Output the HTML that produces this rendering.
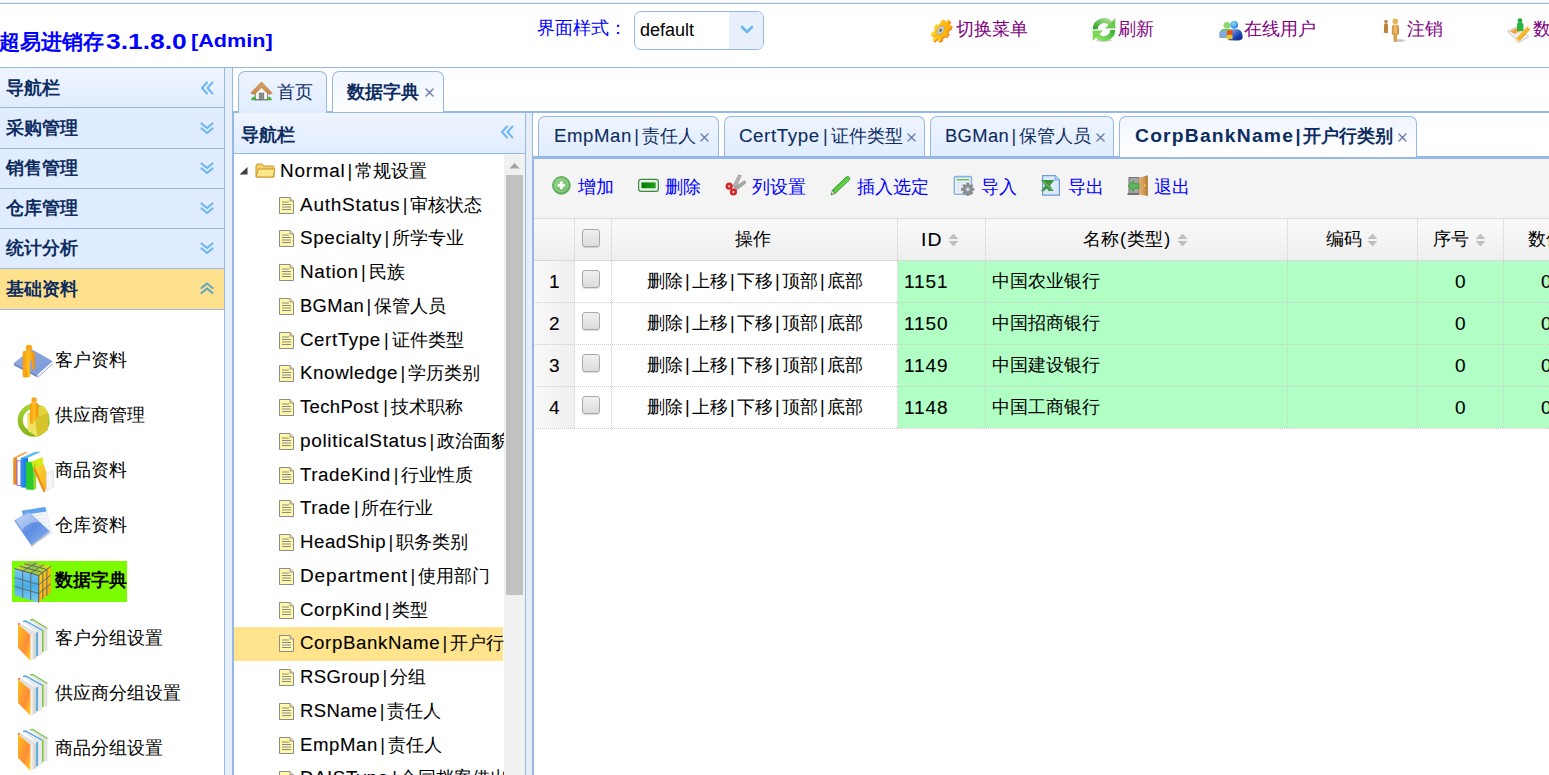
<!DOCTYPE html>
<html><head><meta charset="utf-8"><title>超易进销存</title>
<style>
html,body{margin:0;padding:0;}
body{width:1549px;height:775px;overflow:hidden;position:relative;background:#fff;font-family:'Liberation Sans',sans-serif;}
div{box-sizing:content-box;}
</style></head><body>
<div style="position:absolute;left:0px;top:2px;width:1549px;height:1px;background:#f3efe9"></div>
<div style="position:absolute;left:0px;top:3px;width:1549px;height:1px;background:#95B8E7"></div>
<div style="position:absolute;left:0px;top:67px;width:1549px;height:1px;background:#95B8E7"></div>
<div style="position:absolute;left:-1px;top:31px;font-size:21px;line-height:22px;font-weight:700;color:#0000FF;white-space:nowrap">超易进销存<span style="font-size:22px;display:inline-block;transform:scaleX(1.2);transform-origin:0 0;margin-left:2px;margin-right:13.5px">3.1.8.0</span><span style="font-size:18.5px;display:inline-block;transform:scaleX(1.17);transform-origin:0 0;margin-left:4px;position:relative;top:-2px">[Admin]</span></div>
<div style="position:absolute;left:537px;top:19.06px;font-size:18px;line-height:18px;font-weight:400;color:#0000FF;white-space:nowrap;">界面样式：</div>
<div style="position:absolute;left:634px;top:11px;width:128px;height:37px;border:1px solid #95B8E7;border-radius:7px;background:#fff;overflow:hidden"></div>
<div style="position:absolute;left:729px;top:12px;width:34px;height:37px;background:#E8F0FC;border-radius:0 6px 6px 0"></div>
<svg style="position:absolute;left:740px;top:25px" width="14" height="10" viewBox="0 0 14 10"><path d="M2 2 L7 7 L12 2" fill="none" stroke="#6DB6EC" stroke-width="2.6" stroke-linecap="round" stroke-linejoin="round"/></svg>
<div style="position:absolute;left:640px;top:20px;font-size:18px;line-height:20px;color:#000;white-space:nowrap">default</div>
<div style="position:absolute;left:955.5px;top:19.96px;font-size:18px;line-height:18px;font-weight:400;color:#800080;white-space:nowrap;">切换菜单</div>
<div style="position:absolute;left:1117.6px;top:19.96px;font-size:18px;line-height:18px;font-weight:400;color:#800080;white-space:nowrap;">刷新</div>
<div style="position:absolute;left:1244px;top:19.96px;font-size:18px;line-height:18px;font-weight:400;color:#800080;white-space:nowrap;">在线用户</div>
<div style="position:absolute;left:1407px;top:19.96px;font-size:18px;line-height:18px;font-weight:400;color:#800080;white-space:nowrap;">注销</div>
<div style="position:absolute;left:1532.5px;top:19.96px;font-size:18px;line-height:18px;font-weight:400;color:#800080;white-space:nowrap;">数据</div>
<div style="position:absolute;left:0px;top:68px;width:224px;height:39px;background:linear-gradient(to bottom,#EFF5FF 0,#E0ECFF 100%)"></div>
<div style="position:absolute;left:0px;top:107px;width:224px;height:1px;background:#95B8E7"></div>
<div style="position:absolute;left:224px;top:68px;width:1px;height:707px;background:#95B8E7"></div>
<div style="position:absolute;left:225px;top:68px;width:7px;height:707px;background:#E6EEF8"></div>
<div style="position:absolute;left:6px;top:78.96px;font-size:18px;line-height:18px;font-weight:700;color:#0E2D5F;white-space:nowrap;">导航栏</div>
<svg style="position:absolute;left:200px;top:81px" width="14" height="14" viewBox="0 0 14 14"><path d="M7 1.5 L2 7 L7 12.5 M12.5 1.5 L7.5 7 L12.5 12.5" fill="none" stroke="#6DB8F0" stroke-width="2" stroke-linecap="round" stroke-linejoin="round"/></svg>
<div style="position:absolute;left:0px;top:108px;width:224px;height:40px;background:#E0ECFF"></div>
<div style="position:absolute;left:0px;top:148px;width:224px;height:1px;background:#95B8E7"></div>
<div style="position:absolute;left:6px;top:118.96px;font-size:18px;line-height:18px;font-weight:700;color:#0E2D5F;white-space:nowrap;">采购管理</div>
<svg style="position:absolute;left:200px;top:122px" width="14" height="13" viewBox="0 0 14 13"><path d="M1.5 1.5 L7 6 L12.5 1.5 M1.5 6.5 L7 11 L12.5 6.5" fill="none" stroke="#6DB8F0" stroke-width="2.2" stroke-linecap="round" stroke-linejoin="round"/></svg>
<div style="position:absolute;left:0px;top:149px;width:224px;height:39px;background:#E0ECFF"></div>
<div style="position:absolute;left:0px;top:188px;width:224px;height:1px;background:#95B8E7"></div>
<div style="position:absolute;left:6px;top:158.96px;font-size:18px;line-height:18px;font-weight:700;color:#0E2D5F;white-space:nowrap;">销售管理</div>
<svg style="position:absolute;left:200px;top:162px" width="14" height="13" viewBox="0 0 14 13"><path d="M1.5 1.5 L7 6 L12.5 1.5 M1.5 6.5 L7 11 L12.5 6.5" fill="none" stroke="#6DB8F0" stroke-width="2.2" stroke-linecap="round" stroke-linejoin="round"/></svg>
<div style="position:absolute;left:0px;top:189px;width:224px;height:39px;background:#E0ECFF"></div>
<div style="position:absolute;left:0px;top:228px;width:224px;height:1px;background:#95B8E7"></div>
<div style="position:absolute;left:6px;top:198.96px;font-size:18px;line-height:18px;font-weight:700;color:#0E2D5F;white-space:nowrap;">仓库管理</div>
<svg style="position:absolute;left:200px;top:202px" width="14" height="13" viewBox="0 0 14 13"><path d="M1.5 1.5 L7 6 L12.5 1.5 M1.5 6.5 L7 11 L12.5 6.5" fill="none" stroke="#6DB8F0" stroke-width="2.2" stroke-linecap="round" stroke-linejoin="round"/></svg>
<div style="position:absolute;left:0px;top:229px;width:224px;height:39px;background:#E0ECFF"></div>
<div style="position:absolute;left:0px;top:268px;width:224px;height:1px;background:#95B8E7"></div>
<div style="position:absolute;left:6px;top:238.96px;font-size:18px;line-height:18px;font-weight:700;color:#0E2D5F;white-space:nowrap;">统计分析</div>
<svg style="position:absolute;left:200px;top:242px" width="14" height="13" viewBox="0 0 14 13"><path d="M1.5 1.5 L7 6 L12.5 1.5 M1.5 6.5 L7 11 L12.5 6.5" fill="none" stroke="#6DB8F0" stroke-width="2.2" stroke-linecap="round" stroke-linejoin="round"/></svg>
<div style="position:absolute;left:0px;top:269px;width:224px;height:40px;background:#FFE08C"></div>
<div style="position:absolute;left:0px;top:309px;width:224px;height:1px;background:#95B8E7"></div>
<div style="position:absolute;left:6px;top:279.96px;font-size:18px;line-height:18px;font-weight:700;color:#0E2D5F;white-space:nowrap;">基础资料</div>
<svg style="position:absolute;left:200px;top:282px" width="14" height="13" viewBox="0 0 14 13"><path d="M1.5 6 L7 1.5 L12.5 6 M1.5 11 L7 6.5 L12.5 11" fill="none" stroke="#62A8BE" stroke-width="2.2" stroke-linecap="round" stroke-linejoin="round"/></svg>
<div style="position:absolute;left:12px;top:561px;width:115px;height:41px;background:#7CFC00"></div>
<div style="position:absolute;left:54.5px;top:351.06px;font-size:18px;line-height:18px;font-weight:400;color:#000;white-space:nowrap;">客户资料</div>
<div style="position:absolute;left:54.5px;top:405.66px;font-size:18px;line-height:18px;font-weight:400;color:#000;white-space:nowrap;">供应商管理</div>
<div style="position:absolute;left:54.5px;top:460.96px;font-size:18px;line-height:18px;font-weight:400;color:#000;white-space:nowrap;">商品资料</div>
<div style="position:absolute;left:54.5px;top:515.96px;font-size:18px;line-height:18px;font-weight:400;color:#000;white-space:nowrap;">仓库资料</div>
<div style="position:absolute;left:54.5px;top:571.46px;font-size:18px;line-height:18px;font-weight:700;color:#000;white-space:nowrap;">数据字典</div>
<div style="position:absolute;left:54.5px;top:629.46px;font-size:18px;line-height:18px;font-weight:400;color:#000;white-space:nowrap;">客户分组设置</div>
<div style="position:absolute;left:54.5px;top:683.86px;font-size:18px;line-height:18px;font-weight:400;color:#000;white-space:nowrap;">供应商分组设置</div>
<div style="position:absolute;left:54.5px;top:739.06px;font-size:18px;line-height:18px;font-weight:400;color:#000;white-space:nowrap;">商品分组设置</div>
<div style="position:absolute;left:232px;top:67px;width:1317px;height:1px;background:#95B8E7"></div>
<div style="position:absolute;left:232px;top:68px;width:1px;height:707px;background:#95B8E7"></div>
<div style="position:absolute;left:233px;top:68px;width:1316px;height:43px;background:#fff"></div>
<div style="position:absolute;left:233px;top:111px;width:1316px;height:2px;background:#95B8E7"></div>
<div style="position:absolute;left:238px;top:71px;width:87px;height:41px;border:1px solid #95B8E7;border-bottom:none;border-radius:7px 7px 0 0;background:linear-gradient(to bottom,#EFF5FF 0,#E0ECFF 100%)"></div>
<div style="position:absolute;left:332px;top:71px;width:110px;height:40px;border:1px solid #95B8E7;border-bottom:none;border-radius:7px 7px 0 0;background:linear-gradient(to bottom,#EFF5FF 0,#fff 100%)"></div>
<div style="position:absolute;left:277px;top:82.96px;font-size:18px;line-height:18px;font-weight:400;color:#0E2D5F;white-space:nowrap;">首页</div>
<div style="position:absolute;left:346.7px;top:83.46px;font-size:18px;line-height:18px;font-weight:700;color:#0E2D5F;white-space:nowrap;">数据字典</div>
<svg style="position:absolute;left:425px;top:88px" width="9" height="9" viewBox="0 0 9 9"><path d="M1 1 L8 8 M8 1 L1 8" stroke="#7385AE" stroke-width="1.5" stroke-linecap="round"/><circle cx="4.5" cy="4.5" r="1" fill="#7385AE"/></svg>
<div style="position:absolute;left:233px;top:113px;width:1px;height:662px;background:#95B8E7"></div>
<div style="position:absolute;left:234px;top:113px;width:291px;height:40px;background:linear-gradient(to bottom,#EFF5FF 0,#E0ECFF 100%)"></div>
<div style="position:absolute;left:234px;top:153px;width:291px;height:1px;background:#95B8E7"></div>
<div style="position:absolute;left:525px;top:113px;width:1px;height:662px;background:#95B8E7"></div>
<div style="position:absolute;left:526px;top:113px;width:6px;height:662px;background:#E6EEF8"></div>
<div style="position:absolute;left:234px;top:154px;width:291px;height:621px;background:#fff"></div>
<div style="position:absolute;left:241.3px;top:125.96px;font-size:18px;line-height:18px;font-weight:700;color:#0E2D5F;white-space:nowrap;">导航栏</div>
<svg style="position:absolute;left:500px;top:125px" width="14" height="14" viewBox="0 0 14 14"><path d="M7 1.5 L2 7 L7 12.5 M12.5 1.5 L7.5 7 L12.5 12.5" fill="none" stroke="#6DB8F0" stroke-width="2" stroke-linecap="round" stroke-linejoin="round"/></svg>
<div style="position:absolute;left:504px;top:154px;width:21px;height:621px;background:#F1F1F1"></div>
<svg style="position:absolute;left:509px;top:162px" width="11" height="7" viewBox="0 0 11 7"><path d="M0.5 6.5 L5.5 1 L10.5 6.5 Z" fill="#A3A3A3"/></svg>
<div style="position:absolute;left:506px;top:175px;width:17px;height:420px;background:#C1C1C1"></div>
<div style="position:absolute;left:234px;top:627px;width:269px;height:34px;background:#FFE48D"></div>
<div style="position:absolute;left:234px;top:154px;width:270px;height:621px;overflow:hidden">
<svg style="position:absolute;left:5px;top:12.8px" width="9" height="8"><path d="M0.5 7.5 L8.5 7.5 L8.5 0 Z" fill="#404040"/></svg>
<svg style="position:absolute;left:21px;top:8.8px" width="21" height="16"><path d="M1 3 Q1 1 3 1 L7 1 L9 3 L18 3 Q19 3 19 4 L19 14 L1 14 Z" fill="#F4D268" stroke="#C9952E" stroke-width="1"/>
<path d="M1 14 L3.5 6 L20 6 L18 14 Z" fill="#FCE68A" stroke="#C9952E" stroke-width="1"/></svg>
<div style="position:absolute;left:45.39999999999998px;top:7.76px;font-size:18px;line-height:18px;color:#000;white-space:nowrap"><span style="display:inline-block;width:65.36px"><span style="display:inline-block;transform:scaleX(1.0507);transform-origin:0 0;letter-spacing:0.700px;margin-left:0.350px;-webkit-text-stroke:0.1px currentColor">Normal</span></span><span style="display:inline-block;width:10.19px;text-align:center">|</span>常规设置</div>
<svg style="position:absolute;left:45px;top:42.6px" width="15" height="17"><path d="M0.5 0.5 L11 0.5 L14.5 4 L14.5 16.5 L0.5 16.5 Z" fill="#FFF8A8" stroke="#8C8C8C" stroke-width="1"/>
<path d="M11 0.5 L11 4 L14.5 4" fill="#F0D0A0" stroke="#8C8C8C" stroke-width="0.8"/>
<path d="M3 5 L10 5 M3 7.5 L12 7.5 M3 10 L12 10 M3 12.5 L12 12.5" stroke="#8A8A8A" stroke-width="1"/></svg>
<div style="position:absolute;left:65.69999999999999px;top:41.52px;font-size:18px;line-height:18px;color:#000;white-space:nowrap"><span style="display:inline-block;width:100.30px"><span style="display:inline-block;transform:scaleX(1.0556);transform-origin:0 0;letter-spacing:0.696px;margin-left:0.348px;-webkit-text-stroke:0.1px currentColor">AuthStatus</span></span><span style="display:inline-block;width:10.19px;text-align:center">|</span>审核状态</div>
<svg style="position:absolute;left:45px;top:76.3px" width="15" height="17"><path d="M0.5 0.5 L11 0.5 L14.5 4 L14.5 16.5 L0.5 16.5 Z" fill="#FFF8A8" stroke="#8C8C8C" stroke-width="1"/>
<path d="M11 0.5 L11 4 L14.5 4" fill="#F0D0A0" stroke="#8C8C8C" stroke-width="0.8"/>
<path d="M3 5 L10 5 M3 7.5 L12 7.5 M3 10 L12 10 M3 12.5 L12 12.5" stroke="#8A8A8A" stroke-width="1"/></svg>
<div style="position:absolute;left:65.69999999999999px;top:75.28px;font-size:18px;line-height:18px;color:#000;white-space:nowrap"><span style="display:inline-block;width:81.99px"><span style="display:inline-block;transform:scaleX(1.0490);transform-origin:0 0;letter-spacing:0.569px;margin-left:0.284px;-webkit-text-stroke:0.1px currentColor">Specialty</span></span><span style="display:inline-block;width:10.19px;text-align:center">|</span>所学专业</div>
<svg style="position:absolute;left:45px;top:110.1px" width="15" height="17"><path d="M0.5 0.5 L11 0.5 L14.5 4 L14.5 16.5 L0.5 16.5 Z" fill="#FFF8A8" stroke="#8C8C8C" stroke-width="1"/>
<path d="M11 0.5 L11 4 L14.5 4" fill="#F0D0A0" stroke="#8C8C8C" stroke-width="0.8"/>
<path d="M3 5 L10 5 M3 7.5 L12 7.5 M3 10 L12 10 M3 12.5 L12 12.5" stroke="#8A8A8A" stroke-width="1"/></svg>
<div style="position:absolute;left:65.69999999999999px;top:109.04px;font-size:18px;line-height:18px;color:#000;white-space:nowrap"><span style="display:inline-block;width:58.68px"><span style="display:inline-block;transform:scaleX(1.0511);transform-origin:0 0;letter-spacing:0.633px;margin-left:0.316px;-webkit-text-stroke:0.1px currentColor">Nation</span></span><span style="display:inline-block;width:10.19px;text-align:center">|</span>民族</div>
<svg style="position:absolute;left:45px;top:143.8px" width="15" height="17"><path d="M0.5 0.5 L11 0.5 L14.5 4 L14.5 16.5 L0.5 16.5 Z" fill="#FFF8A8" stroke="#8C8C8C" stroke-width="1"/>
<path d="M11 0.5 L11 4 L14.5 4" fill="#F0D0A0" stroke="#8C8C8C" stroke-width="0.8"/>
<path d="M3 5 L10 5 M3 7.5 L12 7.5 M3 10 L12 10 M3 12.5 L12 12.5" stroke="#8A8A8A" stroke-width="1"/></svg>
<div style="position:absolute;left:65.69999999999999px;top:142.80px;font-size:18px;line-height:18px;color:#000;white-space:nowrap"><span style="display:inline-block;width:64.04px"><span style="display:inline-block;transform:scaleX(1.0198);transform-origin:0 0;letter-spacing:0.356px;margin-left:0.178px;-webkit-text-stroke:0.1px currentColor">BGMan</span></span><span style="display:inline-block;width:10.19px;text-align:center">|</span>保管人员</div>
<svg style="position:absolute;left:45px;top:177.6px" width="15" height="17"><path d="M0.5 0.5 L11 0.5 L14.5 4 L14.5 16.5 L0.5 16.5 Z" fill="#FFF8A8" stroke="#8C8C8C" stroke-width="1"/>
<path d="M11 0.5 L11 4 L14.5 4" fill="#F0D0A0" stroke="#8C8C8C" stroke-width="0.8"/>
<path d="M3 5 L10 5 M3 7.5 L12 7.5 M3 10 L12 10 M3 12.5 L12 12.5" stroke="#8A8A8A" stroke-width="1"/></svg>
<div style="position:absolute;left:65.69999999999999px;top:176.56px;font-size:18px;line-height:18px;color:#000;white-space:nowrap"><span style="display:inline-block;width:81.67px"><span style="display:inline-block;transform:scaleX(1.0413);transform-origin:0 0;letter-spacing:0.551px;margin-left:0.275px;-webkit-text-stroke:0.1px currentColor">CertType</span></span><span style="display:inline-block;width:10.19px;text-align:center">|</span>证件类型</div>
<svg style="position:absolute;left:45px;top:211.4px" width="15" height="17"><path d="M0.5 0.5 L11 0.5 L14.5 4 L14.5 16.5 L0.5 16.5 Z" fill="#FFF8A8" stroke="#8C8C8C" stroke-width="1"/>
<path d="M11 0.5 L11 4 L14.5 4" fill="#F0D0A0" stroke="#8C8C8C" stroke-width="0.8"/>
<path d="M3 5 L10 5 M3 7.5 L12 7.5 M3 10 L12 10 M3 12.5 L12 12.5" stroke="#8A8A8A" stroke-width="1"/></svg>
<div style="position:absolute;left:65.69999999999999px;top:210.32px;font-size:18px;line-height:18px;color:#000;white-space:nowrap"><span style="display:inline-block;width:98.08px"><span style="display:inline-block;transform:scaleX(1.0405);transform-origin:0 0;letter-spacing:0.578px;margin-left:0.289px;-webkit-text-stroke:0.1px currentColor">Knowledge</span></span><span style="display:inline-block;width:10.19px;text-align:center">|</span>学历类别</div>
<svg style="position:absolute;left:45px;top:245.1px" width="15" height="17"><path d="M0.5 0.5 L11 0.5 L14.5 4 L14.5 16.5 L0.5 16.5 Z" fill="#FFF8A8" stroke="#8C8C8C" stroke-width="1"/>
<path d="M11 0.5 L11 4 L14.5 4" fill="#F0D0A0" stroke="#8C8C8C" stroke-width="0.8"/>
<path d="M3 5 L10 5 M3 7.5 L12 7.5 M3 10 L12 10 M3 12.5 L12 12.5" stroke="#8A8A8A" stroke-width="1"/></svg>
<div style="position:absolute;left:65.69999999999999px;top:244.08px;font-size:18px;line-height:18px;color:#000;white-space:nowrap"><span style="display:inline-block;width:80.78px"><span style="display:inline-block;transform:scaleX(1.0250);transform-origin:0 0;letter-spacing:0.348px;margin-left:0.174px;-webkit-text-stroke:0.1px currentColor">TechPost</span></span><span style="display:inline-block;width:10.19px;text-align:center">|</span>技术职称</div>
<svg style="position:absolute;left:45px;top:278.9px" width="15" height="17"><path d="M0.5 0.5 L11 0.5 L14.5 4 L14.5 16.5 L0.5 16.5 Z" fill="#FFF8A8" stroke="#8C8C8C" stroke-width="1"/>
<path d="M11 0.5 L11 4 L14.5 4" fill="#F0D0A0" stroke="#8C8C8C" stroke-width="0.8"/>
<path d="M3 5 L10 5 M3 7.5 L12 7.5 M3 10 L12 10 M3 12.5 L12 12.5" stroke="#8A8A8A" stroke-width="1"/></svg>
<div style="position:absolute;left:65.69999999999999px;top:277.84px;font-size:18px;line-height:18px;color:#000;white-space:nowrap"><span style="display:inline-block;width:127.15px"><span style="display:inline-block;transform:scaleX(1.0580);transform-origin:0 0;letter-spacing:0.608px;margin-left:0.304px;-webkit-text-stroke:0.1px currentColor">politicalStatus</span></span><span style="display:inline-block;width:10.19px;text-align:center">|</span>政治面貌</div>
<svg style="position:absolute;left:45px;top:312.6px" width="15" height="17"><path d="M0.5 0.5 L11 0.5 L14.5 4 L14.5 16.5 L0.5 16.5 Z" fill="#FFF8A8" stroke="#8C8C8C" stroke-width="1"/>
<path d="M11 0.5 L11 4 L14.5 4" fill="#F0D0A0" stroke="#8C8C8C" stroke-width="0.8"/>
<path d="M3 5 L10 5 M3 7.5 L12 7.5 M3 10 L12 10 M3 12.5 L12 12.5" stroke="#8A8A8A" stroke-width="1"/></svg>
<div style="position:absolute;left:65.69999999999999px;top:311.60px;font-size:18px;line-height:18px;color:#000;white-space:nowrap"><span style="display:inline-block;width:91.33px"><span style="display:inline-block;transform:scaleX(1.0399);transform-origin:0 0;letter-spacing:0.531px;margin-left:0.266px;-webkit-text-stroke:0.1px currentColor">TradeKind</span></span><span style="display:inline-block;width:10.19px;text-align:center">|</span>行业性质</div>
<svg style="position:absolute;left:45px;top:346.4px" width="15" height="17"><path d="M0.5 0.5 L11 0.5 L14.5 4 L14.5 16.5 L0.5 16.5 Z" fill="#FFF8A8" stroke="#8C8C8C" stroke-width="1"/>
<path d="M11 0.5 L11 4 L14.5 4" fill="#F0D0A0" stroke="#8C8C8C" stroke-width="0.8"/>
<path d="M3 5 L10 5 M3 7.5 L12 7.5 M3 10 L12 10 M3 12.5 L12 12.5" stroke="#8A8A8A" stroke-width="1"/></svg>
<div style="position:absolute;left:65.69999999999999px;top:345.36px;font-size:18px;line-height:18px;color:#000;white-space:nowrap"><span style="display:inline-block;width:51.48px"><span style="display:inline-block;transform:scaleX(1.0379);transform-origin:0 0;letter-spacing:0.515px;margin-left:0.258px;-webkit-text-stroke:0.1px currentColor">Trade</span></span><span style="display:inline-block;width:10.19px;text-align:center">|</span>所在行业</div>
<svg style="position:absolute;left:45px;top:380.2px" width="15" height="17"><path d="M0.5 0.5 L11 0.5 L14.5 4 L14.5 16.5 L0.5 16.5 Z" fill="#FFF8A8" stroke="#8C8C8C" stroke-width="1"/>
<path d="M11 0.5 L11 4 L14.5 4" fill="#F0D0A0" stroke="#8C8C8C" stroke-width="0.8"/>
<path d="M3 5 L10 5 M3 7.5 L12 7.5 M3 10 L12 10 M3 12.5 L12 12.5" stroke="#8A8A8A" stroke-width="1"/></svg>
<div style="position:absolute;left:65.69999999999999px;top:379.12px;font-size:18px;line-height:18px;color:#000;white-space:nowrap"><span style="display:inline-block;width:86.09px"><span style="display:inline-block;transform:scaleX(1.0356);transform-origin:0 0;letter-spacing:0.510px;margin-left:0.255px;-webkit-text-stroke:0.1px currentColor">HeadShip</span></span><span style="display:inline-block;width:10.19px;text-align:center">|</span>职务类别</div>
<svg style="position:absolute;left:45px;top:413.9px" width="15" height="17"><path d="M0.5 0.5 L11 0.5 L14.5 4 L14.5 16.5 L0.5 16.5 Z" fill="#FFF8A8" stroke="#8C8C8C" stroke-width="1"/>
<path d="M11 0.5 L11 4 L14.5 4" fill="#F0D0A0" stroke="#8C8C8C" stroke-width="0.8"/>
<path d="M3 5 L10 5 M3 7.5 L12 7.5 M3 10 L12 10 M3 12.5 L12 12.5" stroke="#8A8A8A" stroke-width="1"/></svg>
<div style="position:absolute;left:65.69999999999999px;top:412.88px;font-size:18px;line-height:18px;color:#000;white-space:nowrap"><span style="display:inline-block;width:108.00px"><span style="display:inline-block;transform:scaleX(1.0594);transform-origin:0 0;letter-spacing:0.790px;margin-left:0.395px;-webkit-text-stroke:0.1px currentColor">Department</span></span><span style="display:inline-block;width:10.19px;text-align:center">|</span>使用部门</div>
<svg style="position:absolute;left:45px;top:447.7px" width="15" height="17"><path d="M0.5 0.5 L11 0.5 L14.5 4 L14.5 16.5 L0.5 16.5 Z" fill="#FFF8A8" stroke="#8C8C8C" stroke-width="1"/>
<path d="M11 0.5 L11 4 L14.5 4" fill="#F0D0A0" stroke="#8C8C8C" stroke-width="0.8"/>
<path d="M3 5 L10 5 M3 7.5 L12 7.5 M3 10 L12 10 M3 12.5 L12 12.5" stroke="#8A8A8A" stroke-width="1"/></svg>
<div style="position:absolute;left:65.69999999999999px;top:446.64px;font-size:18px;line-height:18px;color:#000;white-space:nowrap"><span style="display:inline-block;width:82.22px"><span style="display:inline-block;transform:scaleX(1.0383);transform-origin:0 0;letter-spacing:0.519px;margin-left:0.259px;-webkit-text-stroke:0.1px currentColor">CorpKind</span></span><span style="display:inline-block;width:10.19px;text-align:center">|</span>类型</div>
<svg style="position:absolute;left:45px;top:481.4px" width="15" height="17"><path d="M0.5 0.5 L11 0.5 L14.5 4 L14.5 16.5 L0.5 16.5 Z" fill="#FFF8A8" stroke="#8C8C8C" stroke-width="1"/>
<path d="M11 0.5 L11 4 L14.5 4" fill="#F0D0A0" stroke="#8C8C8C" stroke-width="0.8"/>
<path d="M3 5 L10 5 M3 7.5 L12 7.5 M3 10 L12 10 M3 12.5 L12 12.5" stroke="#8A8A8A" stroke-width="1"/></svg>
<div style="position:absolute;left:65.69999999999999px;top:480.40px;font-size:18px;line-height:18px;color:#000;white-space:nowrap"><span style="display:inline-block;width:140.11px"><span style="display:inline-block;transform:scaleX(1.0377);transform-origin:0 0;letter-spacing:0.581px;margin-left:0.290px;-webkit-text-stroke:0.1px currentColor">CorpBankName</span></span><span style="display:inline-block;width:10.19px;text-align:center">|</span>开户行类别</div>
<svg style="position:absolute;left:45px;top:515.2px" width="15" height="17"><path d="M0.5 0.5 L11 0.5 L14.5 4 L14.5 16.5 L0.5 16.5 Z" fill="#FFF8A8" stroke="#8C8C8C" stroke-width="1"/>
<path d="M11 0.5 L11 4 L14.5 4" fill="#F0D0A0" stroke="#8C8C8C" stroke-width="0.8"/>
<path d="M3 5 L10 5 M3 7.5 L12 7.5 M3 10 L12 10 M3 12.5 L12 12.5" stroke="#8A8A8A" stroke-width="1"/></svg>
<div style="position:absolute;left:65.69999999999999px;top:514.16px;font-size:18px;line-height:18px;color:#000;white-space:nowrap"><span style="display:inline-block;width:80.05px"><span style="display:inline-block;transform:scaleX(1.0267);transform-origin:0 0;letter-spacing:0.419px;margin-left:0.209px;-webkit-text-stroke:0.1px currentColor">RSGroup</span></span><span style="display:inline-block;width:10.19px;text-align:center">|</span>分组</div>
<svg style="position:absolute;left:45px;top:549.0px" width="15" height="17"><path d="M0.5 0.5 L11 0.5 L14.5 4 L14.5 16.5 L0.5 16.5 Z" fill="#FFF8A8" stroke="#8C8C8C" stroke-width="1"/>
<path d="M11 0.5 L11 4 L14.5 4" fill="#F0D0A0" stroke="#8C8C8C" stroke-width="0.8"/>
<path d="M3 5 L10 5 M3 7.5 L12 7.5 M3 10 L12 10 M3 12.5 L12 12.5" stroke="#8A8A8A" stroke-width="1"/></svg>
<div style="position:absolute;left:65.69999999999999px;top:547.92px;font-size:18px;line-height:18px;color:#000;white-space:nowrap"><span style="display:inline-block;width:77.42px"><span style="display:inline-block;transform:scaleX(1.0241);transform-origin:0 0;letter-spacing:0.429px;margin-left:0.215px;-webkit-text-stroke:0.1px currentColor">RSName</span></span><span style="display:inline-block;width:10.19px;text-align:center">|</span>责任人</div>
<svg style="position:absolute;left:45px;top:582.7px" width="15" height="17"><path d="M0.5 0.5 L11 0.5 L14.5 4 L14.5 16.5 L0.5 16.5 Z" fill="#FFF8A8" stroke="#8C8C8C" stroke-width="1"/>
<path d="M11 0.5 L11 4 L14.5 4" fill="#F0D0A0" stroke="#8C8C8C" stroke-width="0.8"/>
<path d="M3 5 L10 5 M3 7.5 L12 7.5 M3 10 L12 10 M3 12.5 L12 12.5" stroke="#8A8A8A" stroke-width="1"/></svg>
<div style="position:absolute;left:65.69999999999999px;top:581.68px;font-size:18px;line-height:18px;color:#000;white-space:nowrap"><span style="display:inline-block;width:77.80px"><span style="display:inline-block;transform:scaleX(1.0320);transform-origin:0 0;letter-spacing:0.559px;margin-left:0.280px;-webkit-text-stroke:0.1px currentColor">EmpMan</span></span><span style="display:inline-block;width:10.19px;text-align:center">|</span>责任人</div>
<svg style="position:absolute;left:45px;top:616.5px" width="15" height="17"><path d="M0.5 0.5 L11 0.5 L14.5 4 L14.5 16.5 L0.5 16.5 Z" fill="#FFF8A8" stroke="#8C8C8C" stroke-width="1"/>
<path d="M11 0.5 L11 4 L14.5 4" fill="#F0D0A0" stroke="#8C8C8C" stroke-width="0.8"/>
<path d="M3 5 L10 5 M3 7.5 L12 7.5 M3 10 L12 10 M3 12.5 L12 12.5" stroke="#8A8A8A" stroke-width="1"/></svg>
<div style="position:absolute;left:65.69999999999999px;top:615.44px;font-size:18px;line-height:18px;color:#000;white-space:nowrap"><span style="display:inline-block;width:89.73px"><span style="display:inline-block;transform:scaleX(1.0376);transform-origin:0 0;letter-spacing:0.557px;margin-left:0.278px;-webkit-text-stroke:0.1px currentColor">DAISType</span></span><span style="display:inline-block;width:10.19px;text-align:center">|</span>合同档案借出</div>
</div>
<div style="position:absolute;left:532px;top:113px;width:1px;height:662px;background:#95B8E7"></div>
<div style="position:absolute;left:533px;top:113px;width:1016px;height:43px;background:#fff"></div>
<div style="position:absolute;left:533px;top:156px;width:1016px;height:3px;background:#95B8E7"></div>
<div style="position:absolute;left:533px;top:159px;width:1px;height:616px;background:#95B8E7"></div>
<div style="position:absolute;left:538px;top:116px;width:179px;height:39px;border:1px solid #95B8E7;border-bottom:none;border-radius:7px 7px 0 0;background:linear-gradient(to bottom,#EFF5FF 0,#E0ECFF 100%)"></div>
<div style="position:absolute;left:553.8px;top:126.96px;font-size:18px;line-height:18px;font-weight:400;color:#0E2D5F;white-space:nowrap;"><span style="display:inline-block;width:77.80px"><span style="display:inline-block;transform:scaleX(1.0320);transform-origin:0 0;letter-spacing:0.559px;margin-left:0.280px;-webkit-text-stroke:0.1px currentColor">EmpMan</span></span><span style="display:inline-block;width:10.19px;text-align:center">|</span>责任人</div>
<svg style="position:absolute;left:700.4px;top:132.5px" width="9" height="9" viewBox="0 0 9 9"><path d="M1 1 L8 8 M8 1 L1 8" stroke="#7385AE" stroke-width="1.5" stroke-linecap="round"/><circle cx="4.5" cy="4.5" r="1" fill="#7385AE"/></svg>
<div style="position:absolute;left:724px;top:116px;width:199px;height:39px;border:1px solid #95B8E7;border-bottom:none;border-radius:7px 7px 0 0;background:linear-gradient(to bottom,#EFF5FF 0,#E0ECFF 100%)"></div>
<div style="position:absolute;left:738.7px;top:126.96px;font-size:18px;line-height:18px;font-weight:400;color:#0E2D5F;white-space:nowrap;"><span style="display:inline-block;width:81.67px"><span style="display:inline-block;transform:scaleX(1.0413);transform-origin:0 0;letter-spacing:0.551px;margin-left:0.275px;-webkit-text-stroke:0.1px currentColor">CertType</span></span><span style="display:inline-block;width:10.19px;text-align:center">|</span>证件类型</div>
<svg style="position:absolute;left:906.5px;top:132.5px" width="9" height="9" viewBox="0 0 9 9"><path d="M1 1 L8 8 M8 1 L1 8" stroke="#7385AE" stroke-width="1.5" stroke-linecap="round"/><circle cx="4.5" cy="4.5" r="1" fill="#7385AE"/></svg>
<div style="position:absolute;left:930px;top:116px;width:182px;height:39px;border:1px solid #95B8E7;border-bottom:none;border-radius:7px 7px 0 0;background:linear-gradient(to bottom,#EFF5FF 0,#E0ECFF 100%)"></div>
<div style="position:absolute;left:944.7px;top:126.96px;font-size:18px;line-height:18px;font-weight:400;color:#0E2D5F;white-space:nowrap;"><span style="display:inline-block;width:64.04px"><span style="display:inline-block;transform:scaleX(1.0198);transform-origin:0 0;letter-spacing:0.356px;margin-left:0.178px;-webkit-text-stroke:0.1px currentColor">BGMan</span></span><span style="display:inline-block;width:10.19px;text-align:center">|</span>保管人员</div>
<svg style="position:absolute;left:1095.5px;top:132.5px" width="9" height="9" viewBox="0 0 9 9"><path d="M1 1 L8 8 M8 1 L1 8" stroke="#7385AE" stroke-width="1.5" stroke-linecap="round"/><circle cx="4.5" cy="4.5" r="1" fill="#7385AE"/></svg>
<div style="position:absolute;left:1119px;top:116px;width:296px;height:40px;border:1px solid #95B8E7;border-bottom:none;border-radius:7px 7px 0 0;background:linear-gradient(to bottom,#EFF5FF 0,#fff 100%)"></div>
<div style="position:absolute;left:1134px;top:126.96px;font-size:18px;line-height:18px;font-weight:700;color:#0E2D5F;white-space:nowrap;"><span style="display:inline-block;width:159.13px"><span style="display:inline-block;transform:scaleX(1.0714);transform-origin:0 0;letter-spacing:1.124px;margin-left:0.562px;-webkit-text-stroke:0px currentColor">CorpBankName</span></span><span style="display:inline-block;width:9.79px;text-align:center">|</span>开户行类别</div>
<svg style="position:absolute;left:1398px;top:132.5px" width="9" height="9" viewBox="0 0 9 9"><path d="M1 1 L8 8 M8 1 L1 8" stroke="#7385AE" stroke-width="1.5" stroke-linecap="round"/><circle cx="4.5" cy="4.5" r="1" fill="#7385AE"/></svg>
<div style="position:absolute;left:534px;top:159px;width:1015px;height:59px;background:#F4F4F4"></div>
<div style="position:absolute;left:534px;top:218px;width:1015px;height:1px;background:#DDDDDD"></div>
<div style="position:absolute;left:577.8px;top:177.66px;font-size:18px;line-height:18px;font-weight:400;color:#0000FF;white-space:nowrap;">增加</div>
<div style="position:absolute;left:665px;top:177.66px;font-size:18px;line-height:18px;font-weight:400;color:#0000FF;white-space:nowrap;">删除</div>
<div style="position:absolute;left:751.5px;top:177.66px;font-size:18px;line-height:18px;font-weight:400;color:#0000FF;white-space:nowrap;">列设置</div>
<div style="position:absolute;left:856.8px;top:177.66px;font-size:18px;line-height:18px;font-weight:400;color:#0000FF;white-space:nowrap;">插入选定</div>
<div style="position:absolute;left:980.7px;top:177.66px;font-size:18px;line-height:18px;font-weight:400;color:#0000FF;white-space:nowrap;">导入</div>
<div style="position:absolute;left:1067.8px;top:177.66px;font-size:18px;line-height:18px;font-weight:400;color:#0000FF;white-space:nowrap;">导出</div>
<div style="position:absolute;left:1154px;top:177.66px;font-size:18px;line-height:18px;font-weight:400;color:#0000FF;white-space:nowrap;">退出</div>
<div style="position:absolute;left:534px;top:219px;width:1015px;height:41px;background:linear-gradient(to bottom,#F9F9F9 0,#EFEFEF 100%)"></div>
<div style="position:absolute;left:534px;top:260px;width:1015px;height:1px;background:#D8D8D8"></div>
<div style="position:absolute;left:574px;top:219px;width:0;height:209px;border-left:1px dotted #CCCCCC"></div>
<div style="position:absolute;left:611px;top:219px;width:0;height:209px;border-left:1px dotted #CCCCCC"></div>
<div style="position:absolute;left:897px;top:219px;width:0;height:209px;border-left:1px dotted #CCCCCC"></div>
<div style="position:absolute;left:985px;top:219px;width:0;height:209px;border-left:1px dotted #CCCCCC"></div>
<div style="position:absolute;left:1287px;top:219px;width:0;height:209px;border-left:1px dotted #CCCCCC"></div>
<div style="position:absolute;left:1417px;top:219px;width:0;height:209px;border-left:1px dotted #CCCCCC"></div>
<div style="position:absolute;left:1503px;top:219px;width:0;height:209px;border-left:1px dotted #CCCCCC"></div>
<div style="position:absolute;left:534px;top:261px;width:40px;height:167px;background:linear-gradient(to right,#F9F9F9 0,#EFEFEF 100%)"></div>
<div style="position:absolute;left:898px;top:261px;width:651px;height:167px;background:#B1FFC4"></div>
<div style="position:absolute;left:574px;top:261px;width:0;height:167px;border-left:1px dotted #CCCCCC"></div>
<div style="position:absolute;left:611px;top:261px;width:0;height:167px;border-left:1px dotted #CCCCCC"></div>
<div style="position:absolute;left:897px;top:261px;width:0;height:167px;border-left:1px dotted #CCCCCC"></div>
<div style="position:absolute;left:985px;top:261px;width:0;height:167px;border-left:1px dotted #CCCCCC"></div>
<div style="position:absolute;left:1287px;top:261px;width:0;height:167px;border-left:1px dotted #CCCCCC"></div>
<div style="position:absolute;left:1417px;top:261px;width:0;height:167px;border-left:1px dotted #CCCCCC"></div>
<div style="position:absolute;left:1503px;top:261px;width:0;height:167px;border-left:1px dotted #CCCCCC"></div>
<div style="position:absolute;left:534px;top:302px;width:1015px;height:0;border-top:1px dotted #CCCCCC"></div>
<div style="position:absolute;left:534px;top:344px;width:1015px;height:0;border-top:1px dotted #CCCCCC"></div>
<div style="position:absolute;left:534px;top:386px;width:1015px;height:0;border-top:1px dotted #CCCCCC"></div>
<div style="position:absolute;left:534px;top:428px;width:1015px;height:0;border-top:1px dotted #CCCCCC"></div>
<div style="position:absolute;left:582px;top:228.5px;width:16px;height:16px;border:1px solid #A8A8A8;border-radius:3px;background:linear-gradient(to bottom,#F0F0F0,#DCDCDC);box-shadow:0 1px 1px rgba(0,0,0,0.15)"></div>
<div style="position:absolute;left:735px;top:230.46px;font-size:18px;line-height:18px;font-weight:400;color:#000;white-space:nowrap;">操作</div>
<div style="position:absolute;left:921px;top:231px;font-size:18px;line-height:18px;color:#000"><span style="display:inline-block;width:21.44px"><span style="display:inline-block;transform:scaleX(1.0764);transform-origin:0 0;letter-spacing:0.958px;margin-left:0.479px;-webkit-text-stroke:0.1px currentColor">ID</span></span></div>
<div style="position:absolute;left:1083px;top:230.46px;font-size:18px;line-height:18px;font-weight:400;color:#000;white-space:nowrap;">名称<span style="display:inline-block;width:8.2px;text-align:center">(</span>类型<span style="display:inline-block;width:8.2px;text-align:center">)</span></div>
<div style="position:absolute;left:1325.7px;top:230.46px;font-size:18px;line-height:18px;font-weight:400;color:#000;white-space:nowrap;">编码</div>
<div style="position:absolute;left:1433.4px;top:230.46px;font-size:18px;line-height:18px;font-weight:400;color:#000;white-space:nowrap;">序号</div>
<div style="position:absolute;left:1528px;top:230.46px;font-size:18px;line-height:18px;font-weight:400;color:#000;white-space:nowrap;">数值</div>
<svg style="position:absolute;left:948px;top:232.5px" width="11" height="14" viewBox="0 0 11 14"><path d="M0.5 6 L5.5 0.5 L10.5 6 Z M0.5 8 L5.5 13.5 L10.5 8 Z" fill="#C0C0C0"/></svg>
<svg style="position:absolute;left:1177px;top:232.5px" width="11" height="14" viewBox="0 0 11 14"><path d="M0.5 6 L5.5 0.5 L10.5 6 Z M0.5 8 L5.5 13.5 L10.5 8 Z" fill="#C0C0C0"/></svg>
<svg style="position:absolute;left:1367px;top:232.5px" width="11" height="14" viewBox="0 0 11 14"><path d="M0.5 6 L5.5 0.5 L10.5 6 Z M0.5 8 L5.5 13.5 L10.5 8 Z" fill="#C0C0C0"/></svg>
<svg style="position:absolute;left:1475px;top:232.5px" width="11" height="14" viewBox="0 0 11 14"><path d="M0.5 6 L5.5 0.5 L10.5 6 Z M0.5 8 L5.5 13.5 L10.5 8 Z" fill="#C0C0C0"/></svg>
<div style="position:absolute;left:549px;top:273.0px;font-size:18px;line-height:18px;color:#000"><span style="display:inline-block;width:11.45px"><span style="display:inline-block;transform:scaleX(1.0576);transform-origin:0 0;letter-spacing:0.817px;margin-left:0.409px;-webkit-text-stroke:0.1px currentColor">1</span></span></div>
<div style="position:absolute;left:582px;top:269.5px;width:16px;height:16px;border:1px solid #A8A8A8;border-radius:3px;background:linear-gradient(to bottom,#F0F0F0,#DCDCDC);box-shadow:0 1px 1px rgba(0,0,0,0.15)"></div>
<div style="position:absolute;left:646.8px;top:271.96px;font-size:18px;line-height:18px;font-weight:400;color:#000;white-space:nowrap;">删除<span style="display:inline-block;width:9px;text-align:center">|</span>上移<span style="display:inline-block;width:9px;text-align:center">|</span>下移<span style="display:inline-block;width:9px;text-align:center">|</span>顶部<span style="display:inline-block;width:9px;text-align:center">|</span>底部</div>
<div style="position:absolute;left:904px;top:273.0px;font-size:18px;line-height:18px;color:#000"><span style="display:inline-block;width:45.81px"><span style="display:inline-block;transform:scaleX(1.0576);transform-origin:0 0;letter-spacing:0.817px;margin-left:0.409px;-webkit-text-stroke:0.1px currentColor">1151</span></span></div>
<div style="position:absolute;left:991.7px;top:271.96px;font-size:18px;line-height:18px;font-weight:400;color:#000;white-space:nowrap;">中国农业银行</div>
<div style="position:absolute;left:1455px;top:273.0px;font-size:18px;line-height:18px;color:#000"><span style="display:inline-block;width:11.45px"><span style="display:inline-block;transform:scaleX(1.0576);transform-origin:0 0;letter-spacing:0.817px;margin-left:0.409px;-webkit-text-stroke:0.1px currentColor">0</span></span></div>
<div style="position:absolute;left:1541px;top:273.0px;font-size:18px;line-height:18px;color:#000"><span style="display:inline-block;width:11.45px"><span style="display:inline-block;transform:scaleX(1.0576);transform-origin:0 0;letter-spacing:0.817px;margin-left:0.409px;-webkit-text-stroke:0.1px currentColor">0</span></span></div>
<div style="position:absolute;left:549px;top:315.0px;font-size:18px;line-height:18px;color:#000"><span style="display:inline-block;width:11.45px"><span style="display:inline-block;transform:scaleX(1.0576);transform-origin:0 0;letter-spacing:0.817px;margin-left:0.409px;-webkit-text-stroke:0.1px currentColor">2</span></span></div>
<div style="position:absolute;left:582px;top:311.5px;width:16px;height:16px;border:1px solid #A8A8A8;border-radius:3px;background:linear-gradient(to bottom,#F0F0F0,#DCDCDC);box-shadow:0 1px 1px rgba(0,0,0,0.15)"></div>
<div style="position:absolute;left:646.8px;top:313.96px;font-size:18px;line-height:18px;font-weight:400;color:#000;white-space:nowrap;">删除<span style="display:inline-block;width:9px;text-align:center">|</span>上移<span style="display:inline-block;width:9px;text-align:center">|</span>下移<span style="display:inline-block;width:9px;text-align:center">|</span>顶部<span style="display:inline-block;width:9px;text-align:center">|</span>底部</div>
<div style="position:absolute;left:904px;top:315.0px;font-size:18px;line-height:18px;color:#000"><span style="display:inline-block;width:45.81px"><span style="display:inline-block;transform:scaleX(1.0576);transform-origin:0 0;letter-spacing:0.817px;margin-left:0.409px;-webkit-text-stroke:0.1px currentColor">1150</span></span></div>
<div style="position:absolute;left:991.7px;top:313.96px;font-size:18px;line-height:18px;font-weight:400;color:#000;white-space:nowrap;">中国招商银行</div>
<div style="position:absolute;left:1455px;top:315.0px;font-size:18px;line-height:18px;color:#000"><span style="display:inline-block;width:11.45px"><span style="display:inline-block;transform:scaleX(1.0576);transform-origin:0 0;letter-spacing:0.817px;margin-left:0.409px;-webkit-text-stroke:0.1px currentColor">0</span></span></div>
<div style="position:absolute;left:1541px;top:315.0px;font-size:18px;line-height:18px;color:#000"><span style="display:inline-block;width:11.45px"><span style="display:inline-block;transform:scaleX(1.0576);transform-origin:0 0;letter-spacing:0.817px;margin-left:0.409px;-webkit-text-stroke:0.1px currentColor">0</span></span></div>
<div style="position:absolute;left:549px;top:357.0px;font-size:18px;line-height:18px;color:#000"><span style="display:inline-block;width:11.45px"><span style="display:inline-block;transform:scaleX(1.0576);transform-origin:0 0;letter-spacing:0.817px;margin-left:0.409px;-webkit-text-stroke:0.1px currentColor">3</span></span></div>
<div style="position:absolute;left:582px;top:353.5px;width:16px;height:16px;border:1px solid #A8A8A8;border-radius:3px;background:linear-gradient(to bottom,#F0F0F0,#DCDCDC);box-shadow:0 1px 1px rgba(0,0,0,0.15)"></div>
<div style="position:absolute;left:646.8px;top:355.96px;font-size:18px;line-height:18px;font-weight:400;color:#000;white-space:nowrap;">删除<span style="display:inline-block;width:9px;text-align:center">|</span>上移<span style="display:inline-block;width:9px;text-align:center">|</span>下移<span style="display:inline-block;width:9px;text-align:center">|</span>顶部<span style="display:inline-block;width:9px;text-align:center">|</span>底部</div>
<div style="position:absolute;left:904px;top:357.0px;font-size:18px;line-height:18px;color:#000"><span style="display:inline-block;width:45.81px"><span style="display:inline-block;transform:scaleX(1.0576);transform-origin:0 0;letter-spacing:0.817px;margin-left:0.409px;-webkit-text-stroke:0.1px currentColor">1149</span></span></div>
<div style="position:absolute;left:991.7px;top:355.96px;font-size:18px;line-height:18px;font-weight:400;color:#000;white-space:nowrap;">中国建设银行</div>
<div style="position:absolute;left:1455px;top:357.0px;font-size:18px;line-height:18px;color:#000"><span style="display:inline-block;width:11.45px"><span style="display:inline-block;transform:scaleX(1.0576);transform-origin:0 0;letter-spacing:0.817px;margin-left:0.409px;-webkit-text-stroke:0.1px currentColor">0</span></span></div>
<div style="position:absolute;left:1541px;top:357.0px;font-size:18px;line-height:18px;color:#000"><span style="display:inline-block;width:11.45px"><span style="display:inline-block;transform:scaleX(1.0576);transform-origin:0 0;letter-spacing:0.817px;margin-left:0.409px;-webkit-text-stroke:0.1px currentColor">0</span></span></div>
<div style="position:absolute;left:549px;top:399.0px;font-size:18px;line-height:18px;color:#000"><span style="display:inline-block;width:11.45px"><span style="display:inline-block;transform:scaleX(1.0576);transform-origin:0 0;letter-spacing:0.817px;margin-left:0.409px;-webkit-text-stroke:0.1px currentColor">4</span></span></div>
<div style="position:absolute;left:582px;top:395.5px;width:16px;height:16px;border:1px solid #A8A8A8;border-radius:3px;background:linear-gradient(to bottom,#F0F0F0,#DCDCDC);box-shadow:0 1px 1px rgba(0,0,0,0.15)"></div>
<div style="position:absolute;left:646.8px;top:397.96px;font-size:18px;line-height:18px;font-weight:400;color:#000;white-space:nowrap;">删除<span style="display:inline-block;width:9px;text-align:center">|</span>上移<span style="display:inline-block;width:9px;text-align:center">|</span>下移<span style="display:inline-block;width:9px;text-align:center">|</span>顶部<span style="display:inline-block;width:9px;text-align:center">|</span>底部</div>
<div style="position:absolute;left:904px;top:399.0px;font-size:18px;line-height:18px;color:#000"><span style="display:inline-block;width:45.81px"><span style="display:inline-block;transform:scaleX(1.0576);transform-origin:0 0;letter-spacing:0.817px;margin-left:0.409px;-webkit-text-stroke:0.1px currentColor">1148</span></span></div>
<div style="position:absolute;left:991.7px;top:397.96px;font-size:18px;line-height:18px;font-weight:400;color:#000;white-space:nowrap;">中国工商银行</div>
<div style="position:absolute;left:1455px;top:399.0px;font-size:18px;line-height:18px;color:#000"><span style="display:inline-block;width:11.45px"><span style="display:inline-block;transform:scaleX(1.0576);transform-origin:0 0;letter-spacing:0.817px;margin-left:0.409px;-webkit-text-stroke:0.1px currentColor">0</span></span></div>
<div style="position:absolute;left:1541px;top:399.0px;font-size:18px;line-height:18px;color:#000"><span style="display:inline-block;width:11.45px"><span style="display:inline-block;transform:scaleX(1.0576);transform-origin:0 0;letter-spacing:0.817px;margin-left:0.409px;-webkit-text-stroke:0.1px currentColor">0</span></span></div>
<svg style="position:absolute;left:929px;top:17px;overflow:visible" width="26" height="28" viewBox="929 17 26 28"><defs><linearGradient id="ggrad" x1="0" y1="0" x2="1" y2="1"><stop offset="0" stop-color="#FFE23A"/><stop offset="1" stop-color="#FFA400"/></linearGradient></defs>
<g transform="translate(942.3,31.6) rotate(-52) scale(1,0.6)"><path d="M9.91 -2.40 L13.00 -2.27 L13.00 2.27 L9.91 2.40 L8.71 5.31 L10.80 7.59 L7.59 10.80 L5.31 8.71 L2.40 9.91 L2.27 13.00 L-2.27 13.00 L-2.40 9.91 L-5.31 8.71 L-7.59 10.80 L-10.80 7.59 L-8.71 5.31 L-9.91 2.40 L-13.00 2.27 L-13.00 -2.27 L-9.91 -2.40 L-8.71 -5.31 L-10.80 -7.59 L-7.59 -10.80 L-5.31 -8.71 L-2.40 -9.91 L-2.27 -13.00 L2.27 -13.00 L2.40 -9.91 L5.31 -8.71 L7.59 -10.80 L10.80 -7.59 L8.71 -5.31 Z" fill="#F07A18"/></g>
<g transform="translate(941.2,30.6) rotate(-52) scale(1,0.6)"><path d="M9.91 -2.40 L13.00 -2.27 L13.00 2.27 L9.91 2.40 L8.71 5.31 L10.80 7.59 L7.59 10.80 L5.31 8.71 L2.40 9.91 L2.27 13.00 L-2.27 13.00 L-2.40 9.91 L-5.31 8.71 L-7.59 10.80 L-10.80 7.59 L-8.71 5.31 L-9.91 2.40 L-13.00 2.27 L-13.00 -2.27 L-9.91 -2.40 L-8.71 -5.31 L-10.80 -7.59 L-7.59 -10.80 L-5.31 -8.71 L-2.40 -9.91 L-2.27 -13.00 L2.27 -13.00 L2.40 -9.91 L5.31 -8.71 L7.59 -10.80 L10.80 -7.59 L8.71 -5.31 Z" fill="url(#ggrad)"/><circle r="8.5" fill="#FFB000" opacity="0.5"/></g>
<g transform="translate(940.6,30.3) rotate(-58)"><ellipse rx="4.8" ry="2.9" fill="#C9C9C9" stroke="#A0A0A0" stroke-width="0.5"/><ellipse rx="1.5" ry="1.1" fill="#555"/></g>
</svg>
<svg style="position:absolute;left:1090px;top:16px;overflow:visible" width="28" height="28" viewBox="1090 16 28 28"><defs><linearGradient id="rg1" x1="0" y1="1" x2="1" y2="0"><stop offset="0" stop-color="#2F9F2A"/><stop offset="1" stop-color="#A6E08C"/></linearGradient><linearGradient id="rg2" x1="1" y1="0" x2="0" y2="1"><stop offset="0" stop-color="#3CAF30"/><stop offset="1" stop-color="#8BE26A"/></linearGradient></defs>
<ellipse cx="1104" cy="40.3" rx="8" ry="1.6" fill="#000" opacity="0.18"/>
<path d="M1095.3 29.2 A 8.7 8.7 0 0 1 1110.6 23.6" fill="none" stroke="url(#rg1)" stroke-width="5"/>
<path d="M1115.3 18.3 L1115.3 28.6 L1105 28.6 Z" fill="#6CCB4E"/>
<path d="M1112.7 30 A 8.7 8.7 0 0 1 1097.4 35.6" fill="none" stroke="url(#rg2)" stroke-width="5"/>
<path d="M1092.7 41 L1092.7 30.6 L1103 30.6 Z" fill="#7AD655"/>
</svg>
<svg style="position:absolute;left:1217px;top:18px;overflow:visible" width="28" height="26" viewBox="1217 18 28 26"><defs><radialGradient id="og1" cx="0.4" cy="0.35" r="0.7"><stop offset="0" stop-color="#7EE2FA"/><stop offset="1" stop-color="#2A7ED8"/></radialGradient><linearGradient id="og2" x1="0" y1="0" x2="1" y2="1"><stop offset="0" stop-color="#9FB8F0"/><stop offset="0.6" stop-color="#1E48B8"/><stop offset="1" stop-color="#0C1E80"/></linearGradient></defs>
<circle cx="1227" cy="25.3" r="3.4" fill="#8ED66C"/>
<path d="M1219.5 38 Q1219 30 1222.5 29 L1231 29 Q1233 31 1232 38 Z" fill="#74C25A"/>
<path d="M1219.5 31.5 L1226.5 30.5 L1226.5 37.5 L1219.5 37 Z" fill="#8AA4EC"/>
<circle cx="1234.2" cy="24.8" r="3.9" fill="url(#og1)"/>
<path d="M1228.5 40.2 Q1228 30 1231.5 29.2 L1238 29.2 Q1242.8 30.5 1242.6 38 Q1242 40.5 1236 40.6 Z" fill="url(#og2)"/>
<path d="M1227 30.8 Q1230 29.5 1232.5 30.5 L1232.5 35 Q1230 34 1227 35.3 Z" fill="#E8531C"/>
<path d="M1227 35.6 Q1230 34.3 1232.5 35.3 L1232.5 39.3 Q1230 38.3 1227 39.5 Z" fill="#F2CC12"/>
</svg>
<svg style="position:absolute;left:1380px;top:16px;overflow:visible" width="24" height="28" viewBox="1380 16 24 28"><defs><linearGradient id="lg1" x1="0" y1="0" x2="1" y2="0"><stop offset="0" stop-color="#C88E3E"/><stop offset="0.5" stop-color="#F2C06A"/><stop offset="1" stop-color="#C08A3A"/></linearGradient></defs>
<ellipse cx="1386" cy="32.3" rx="3" ry="1" fill="#000" opacity="0.18"/>
<ellipse cx="1399.5" cy="40.6" rx="5.5" ry="1.4" fill="#000" opacity="0.22"/>
<circle cx="1386" cy="21.6" r="1.8" fill="#C08A40"/>
<rect x="1384" y="23.3" width="4" height="10" rx="1.8" fill="#B98338"/>
<circle cx="1395.3" cy="21.3" r="2.8" fill="#E8B45A"/>
<rect x="1391.8" y="24.5" width="7.2" height="11" rx="3" fill="url(#lg1)"/>
<rect x="1393.5" y="33" width="3.6" height="9" rx="1.6" fill="#D9A24E"/>
</svg>
<svg style="position:absolute;left:1505px;top:17px;overflow:visible" width="28" height="28" viewBox="1505 17 28 28"><defs><linearGradient id="dg1" x1="0" y1="0" x2="1" y2="1"><stop offset="0" stop-color="#FFE040"/><stop offset="1" stop-color="#EE8A1C"/></linearGradient></defs>
<path d="M1507.5 31.5 L1516.5 27 L1529 36.5 L1519 42.5 Z" fill="#EDEDED" stroke="#B8B8B8" stroke-width="0.7"/>
<path d="M1510 31.3 L1516 28.3 L1521 31 L1514.5 34 Z" fill="#F2A343"/>
<circle cx="1520" cy="20.7" r="2.4" fill="#27A83A"/>
<path d="M1517 24 Q1517 22.5 1519 22.5 L1521.5 22.5 Q1523.5 23 1523.5 25 L1523.5 31 L1517 31 Z" fill="#2DB443"/>
<path d="M1516.3 38.3 L1527 26.5 L1530.4 29.5 L1519.5 41 L1515.8 41.6 Z" fill="url(#dg1)"/>
<path d="M1516.3 38.3 L1519.5 41 L1515.8 41.6 Z" fill="#F4E0B0"/>
</svg>
<svg style="position:absolute;left:12px;top:342px;overflow:visible" width="44" height="40" viewBox="12 342 44 40"><defs><linearGradient id="cb1" x1="0" y1="0" x2="1" y2="1"><stop offset="0" stop-color="#94AEE0"/><stop offset="1" stop-color="#7A96D6"/></linearGradient><linearGradient id="cp1" x1="0" y1="0" x2="1" y2="0"><stop offset="0" stop-color="#F79A10"/><stop offset="0.5" stop-color="#FFC020"/><stop offset="1" stop-color="#F08A08"/></linearGradient></defs>
<path d="M13.8 363 L31.7 349.2 L52.8 361.2 L37.6 374.8 Z" fill="url(#cb1)"/>
<path d="M13.8 363 L37.6 374.8 L37.6 377.6 L14.2 365.4 Z" fill="#6F86C6"/>
<path d="M37.6 374.8 L52.8 361.2 L52.8 363.8 L37.6 377.6 Z" fill="#F4F4FA"/>
<path d="M37.6 377.6 L52.8 363.8" stroke="#7D96D2" stroke-width="0.8"/>
<circle cx="29" cy="348" r="3.3" fill="#F9A71C"/>
<path d="M22.7 353 Q22.7 350.8 25 350.8 L32.6 351.6 Q34.9 352 34.9 354.5 L34.9 369.3 L32 369.3 L32 360 L30.2 362 L30.2 375.6 Q30.2 377.6 28 377.6 L25 377.6 Q22.7 377.6 22.7 375 Z" fill="url(#cp1)"/>
<path d="M26.3 370 L26.3 377" stroke="#E88A0A" stroke-width="0.8"/>
</svg>
<svg style="position:absolute;left:14px;top:394px;overflow:visible" width="40" height="46" viewBox="14 394 40 46"><defs><linearGradient id="sg1" x1="0" y1="0" x2="0" y2="1"><stop offset="0" stop-color="#A6D43A"/><stop offset="1" stop-color="#86B414"/></linearGradient></defs>
<path d="M33.7 403.8 A16 16.5 0 1 0 49.7 420.2 L44.5 420.2 A10.8 11.2 0 1 1 33.7 409 Z" fill="url(#sg1)"/>
<path d="M33.7 403.8 A16 16.5 0 0 1 49.7 420.2 L44.5 420.2 A10.8 11.2 0 0 0 33.7 409 Z" fill="#A6D43A"/>
<path d="M27.5 414 L35 409 L43.5 405.5 L47.8 412.5 L47.8 430 L37.5 436.7 L28 431 Z" fill="#E3D43C"/>
<path d="M27.5 414 L35 418.5 L37.5 436.7 L28 431 Z" fill="#F0E464"/>
<path d="M35 418.5 L47.8 412.5 L47.8 430 L37.5 436.7 Z" fill="#D6C42C"/>
<circle cx="34.1" cy="399.9" r="2.7" fill="#F9A51C"/>
<path d="M30 404.8 Q30 402.6 32 402.6 L36.3 402.6 Q38.3 402.8 38.3 405 L38.3 417 L36.5 417 L35 421 L33.5 421 L33.5 425 L30 423 Z" fill="url(#cp1)"/>
</svg>
<svg style="position:absolute;left:11px;top:450px;overflow:visible" width="46" height="46" viewBox="11 450 46 46"><defs><linearGradient id="gy1" x1="0" y1="0" x2="1" y2="1"><stop offset="0" stop-color="#FFD830"/><stop offset="1" stop-color="#F4B01C"/></linearGradient><linearGradient id="go1" x1="0" y1="0" x2="1" y2="0"><stop offset="0" stop-color="#F4A03A"/><stop offset="1" stop-color="#E07E10"/></linearGradient><linearGradient id="go2" x1="0" y1="0" x2="1" y2="0"><stop offset="0" stop-color="#2C96F0"/><stop offset="1" stop-color="#1672D8"/></linearGradient></defs>
<path d="M13.1 457.8 L24.5 452.3 L28.5 452.3 L17 457.8 Z" fill="#F2A848"/>
<path d="M13.1 457.8 L17 457.8 L17 484.8 L13.1 484.6 Z" fill="url(#go1)"/>
<path d="M17 460.8 L20.9 460.8 L20.9 485.6 L17 485.4 Z" fill="#FFFFFF" stroke="#8E5EEE" stroke-width="0.9"/>
<path d="M20.9 457.8 L35.5 451.8 L41.2 451.8 L28 457.8 Z" fill="#5CC0EE"/>
<path d="M20.9 457.8 L28 457.8 L28 487.8 L20.9 487.4 Z" fill="url(#go2)"/>
<path d="M26.1 461.8 L33.8 461.8 L33.8 490 L26.1 489.6 Z" fill="#2CCB2C"/>
<path d="M31.2 461.8 L42.8 457 L43.2 467.6 L33.8 470.6 Z" fill="#D4EE16"/>
<path d="M33.8 461.8 L33.8 490 L36.2 488.6 L36.2 467 Z" fill="#96D820"/>
<path d="M32.9 468.2 L43.7 464.2 L47.2 475 L47.2 487 L43.7 492.3 Z" fill="url(#gy1)"/>
<path d="M32.9 468.2 L35 467.5 L45.4 491.5 L43.7 492.3 Z" fill="#EE8A18"/>
<path d="M46.2 473.5 L53.3 470.7 L53.3 486.5 L46.6 491.1 Z" fill="#F6F6F6" stroke="#D8D8D8" stroke-width="0.8"/>
</svg>
<svg style="position:absolute;left:11px;top:503px;overflow:visible" width="46" height="46" viewBox="11 503 46 46"><defs><linearGradient id="wg1" x1="0" y1="0" x2="1" y2="1"><stop offset="0" stop-color="#A4BEF0"/><stop offset="0.5" stop-color="#5E8EE2"/><stop offset="1" stop-color="#8CB4F2"/></linearGradient></defs>
<path d="M21.8 511 L45.3 507 L51.8 533.5 L31 545 Z" fill="#F2F5FC" stroke="#D0DAEC" stroke-width="0.6"/>
<path d="M21.8 510.8 L45.3 507 L46.4 511.4 L23 515 Z" fill="#5FA4EC"/>
<path d="M31 516 L44 514 M32 520 L45 518 M33 524 L46 522 M34 528 L47 526" stroke="#D4DCEA" stroke-width="0.6"/>
<path d="M14 520.6 L28.6 512 L49.6 531 L31 545.3 Z" fill="url(#wg1)"/>
<path d="M14 520.6 L31 545.3 L31.5 546.8 L14.5 522 Z" fill="#E8EEF8"/>
<path d="M31 545.3 L49.6 531 L50 532.5 L31.5 546.8 Z" fill="#A8B4C8"/>
<path d="M16 520 L28.5 512.8 L40 523 Q30 520 22 530 Z" fill="#FFFFFF" opacity="0.35"/>
</svg>
<svg style="position:absolute;left:12px;top:559px;overflow:visible" width="42" height="46" viewBox="12 559 42 46"><defs><linearGradient id="cu1" x1="0" y1="0" x2="0" y2="1"><stop offset="0" stop-color="#7CCAF0"/><stop offset="0.5" stop-color="#4AAEE8"/><stop offset="1" stop-color="#7CCAF0"/></linearGradient><linearGradient id="cu2" x1="0" y1="0" x2="1" y2="1"><stop offset="0" stop-color="#FFD21C"/><stop offset="1" stop-color="#F2A00C"/></linearGradient><linearGradient id="cu3" x1="0" y1="0" x2="1" y2="0"><stop offset="0" stop-color="#E4E020"/><stop offset="0.5" stop-color="#8CC840"/><stop offset="1" stop-color="#E8DC10"/></linearGradient></defs><polygon points="14.60,568.50 38.80,575.60 38.80,602.50 14.60,595.40" fill="url(#cu1)"/><polygon points="38.80,575.60 50.90,566.30 50.90,592.30 38.80,602.50" fill="url(#cu2)"/><polygon points="14.60,568.50 29.20,561.30 50.90,566.30 38.80,575.60" fill="url(#cu3)"/><path d="M22.67 570.87 L22.67 597.77 M14.60 577.47 L38.80 584.57 M42.83 572.50 L42.83 599.10 M38.80 584.57 L50.90 574.97 M19.47 566.10 L42.83 572.50 M22.67 570.87 L36.43 562.97 M30.73 573.23 L30.73 600.13 M14.60 586.43 L38.80 593.53 M46.87 569.40 L46.87 595.70 M38.80 593.53 L50.90 583.63 M24.33 563.70 L46.87 569.40 M30.73 573.23 L43.67 564.63" stroke="#5E6A70" stroke-width="1"/><path d="M14.6 568.5 L38.8 575.6 L50.9 566.3 M38.8 575.6 L38.8 602.5" stroke="#4E585E" stroke-width="1" fill="none"/></svg>
<svg style="position:absolute;left:15px;top:616px;overflow:visible" width="36" height="48" viewBox="15 616 36 48"><defs><linearGradient id="bk1" x1="0" y1="0" x2="1" y2="1"><stop offset="0" stop-color="#FFC21A"/><stop offset="0.6" stop-color="#FF8C3A"/><stop offset="1" stop-color="#FFD21A"/></linearGradient><linearGradient id="bk2" x1="0" y1="0" x2="1" y2="0"><stop offset="0" stop-color="#F8F8F8"/><stop offset="1" stop-color="#C8C8C8"/></linearGradient></defs><polygon points="30.00,620.00 32.50,619.30 47.50,628.50 47.50,651.00 43.00,651.50 43.00,630.00" fill="#E2E2E2"/><polyline points="30.00,620.00 32.50,619.30 47.50,628.50" fill="none" stroke="#78C23A" stroke-width="1.2"/><polygon points="42.00,630.00 43.50,629.50 43.50,652.00 42.00,652.50" fill="#7CC83A"/><polygon points="23.00,621.50 25.50,620.80 42.00,630.00 42.00,655.00 37.00,656.00 37.00,633.00" fill="#E8E8E8"/><polyline points="23.00,621.50 25.50,620.80 42.00,630.00" fill="none" stroke="#2E9AE8" stroke-width="1.2"/><polygon points="36.20,632.50 37.80,632.00 37.80,656.00 36.20,656.50" fill="#2496E4"/><polygon points="18.50,624.50 21.00,623.80 36.50,633.00 30.50,635.00" fill="#E0E0E0"/><polygon points="30.40,635.00 36.30,633.00 36.30,658.00 30.40,660.80" fill="url(#bk2)"/><polygon points="18.00,624.20 30.40,634.80 30.40,660.80 22.00,652.00 18.00,648.00" fill="url(#bk1)"/><polyline points="18.00,624.20 20.00,623.50" stroke="#F06A50" stroke-width="1.5"/></svg>
<svg style="position:absolute;left:15px;top:671px;overflow:visible" width="36" height="48" viewBox="15 671 36 48"><defs></defs><polygon points="30.00,675.00 32.50,674.30 47.50,683.50 47.50,706.00 43.00,706.50 43.00,685.00" fill="#E2E2E2"/><polyline points="30.00,675.00 32.50,674.30 47.50,683.50" fill="none" stroke="#78C23A" stroke-width="1.2"/><polygon points="42.00,685.00 43.50,684.50 43.50,707.00 42.00,707.50" fill="#7CC83A"/><polygon points="23.00,676.50 25.50,675.80 42.00,685.00 42.00,710.00 37.00,711.00 37.00,688.00" fill="#E8E8E8"/><polyline points="23.00,676.50 25.50,675.80 42.00,685.00" fill="none" stroke="#2E9AE8" stroke-width="1.2"/><polygon points="36.20,687.50 37.80,687.00 37.80,711.00 36.20,711.50" fill="#2496E4"/><polygon points="18.50,679.50 21.00,678.80 36.50,688.00 30.50,690.00" fill="#E0E0E0"/><polygon points="30.40,690.00 36.30,688.00 36.30,713.00 30.40,715.80" fill="url(#bk2)"/><polygon points="18.00,679.20 30.40,689.80 30.40,715.80 22.00,707.00 18.00,703.00" fill="url(#bk1)"/><polyline points="18.00,679.20 20.00,678.50" stroke="#F06A50" stroke-width="1.5"/></svg>
<svg style="position:absolute;left:15px;top:726px;overflow:visible" width="36" height="48" viewBox="15 726 36 48"><defs></defs><polygon points="30.00,730.00 32.50,729.30 47.50,738.50 47.50,761.00 43.00,761.50 43.00,740.00" fill="#E2E2E2"/><polyline points="30.00,730.00 32.50,729.30 47.50,738.50" fill="none" stroke="#78C23A" stroke-width="1.2"/><polygon points="42.00,740.00 43.50,739.50 43.50,762.00 42.00,762.50" fill="#7CC83A"/><polygon points="23.00,731.50 25.50,730.80 42.00,740.00 42.00,765.00 37.00,766.00 37.00,743.00" fill="#E8E8E8"/><polyline points="23.00,731.50 25.50,730.80 42.00,740.00" fill="none" stroke="#2E9AE8" stroke-width="1.2"/><polygon points="36.20,742.50 37.80,742.00 37.80,766.00 36.20,766.50" fill="#2496E4"/><polygon points="18.50,734.50 21.00,733.80 36.50,743.00 30.50,745.00" fill="#E0E0E0"/><polygon points="30.40,745.00 36.30,743.00 36.30,768.00 30.40,770.80" fill="url(#bk2)"/><polygon points="18.00,734.20 30.40,744.80 30.40,770.80 22.00,762.00 18.00,758.00" fill="url(#bk1)"/><polyline points="18.00,734.20 20.00,733.50" stroke="#F06A50" stroke-width="1.5"/></svg>
<svg style="position:absolute;left:249px;top:80px;overflow:visible" width="25" height="23" viewBox="249 80 25 23"><defs><linearGradient id="hg1" x1="0" y1="0" x2="0" y2="1"><stop offset="0" stop-color="#D6A060"/><stop offset="1" stop-color="#C8864A"/></linearGradient></defs>
<path d="M255.5 92 L255.5 99.5 L267.5 99.5 L267.5 92 L261.5 86 Z" fill="#F6F6F6" stroke="#8A8A8A" stroke-width="0.9"/>
<rect x="259.2" y="93" width="4.6" height="6.8" fill="#8C8C8C" stroke="#6A6A6A" stroke-width="0.6"/>
<path d="M250.6 93.2 L261.5 81.8 L272.4 93.2 L268.6 94.6 L261.5 87.6 L254.4 94.6 Z" fill="url(#hg1)" stroke="#B87838" stroke-width="0.5"/>
<path d="M251 100.2 Q251.5 96.2 255.5 96.4 L256.5 100.2 Z M266.5 100.2 L267.5 96.4 Q271.5 96.2 272 100.2 Z" fill="#4DB03C"/>
<rect x="255" y="99.4" width="13" height="1" fill="#777"/>
</svg>
<svg style="position:absolute;left:550px;top:174px;overflow:visible" width="24" height="24" viewBox="550 174 24 24"><defs><radialGradient id="ad1" cx="0.45" cy="0.4" r="0.6"><stop offset="0" stop-color="#9ADA94"/><stop offset="1" stop-color="#58AE52"/></radialGradient></defs>
<circle cx="561.4" cy="185.4" r="8.8" fill="url(#ad1)" stroke="#5AA456" stroke-width="1"/>
<circle cx="561.4" cy="185.4" r="6.5" fill="none" stroke="#B8E4B4" stroke-width="0.8" opacity="0.8"/>
<path d="M561.4 181.6 L561.4 189.2 M557.6 185.4 L565.2 185.4" stroke="#FFFFFF" stroke-width="2.8"/>
</svg>
<svg style="position:absolute;left:636px;top:177px;overflow:visible" width="25" height="17" viewBox="636 177 25 17"><defs><linearGradient id="dl1" x1="0" y1="0" x2="1" y2="0"><stop offset="0" stop-color="#007800"/><stop offset="1" stop-color="#22A022"/></linearGradient></defs>
<rect x="638.6" y="179.3" width="19.8" height="12" rx="2.4" fill="#E4F2E0" stroke="#3E8A44" stroke-width="1.2"/>
<rect x="641.5" y="182.4" width="14.2" height="5.8" fill="url(#dl1)"/>
</svg>
<svg style="position:absolute;left:722px;top:172px;overflow:visible" width="28" height="26" viewBox="722 172 28 26"><defs></defs>
<path d="M733 186 L738.5 175 L741.2 175.6 L736 188 Z" fill="#B4B4B4" stroke="#8C8C8C" stroke-width="0.6"/>
<path d="M734 188 L744.6 180.5 L745.8 183 L736 190.5 Z" fill="#A8A8A8" stroke="#888" stroke-width="0.6"/>
<circle cx="729.2" cy="186.2" r="3.6" fill="#D42828"/><circle cx="729.2" cy="186.2" r="1" fill="#F0F0F0"/>
<circle cx="733.4" cy="192" r="3.6" fill="#D42828"/><circle cx="733.4" cy="192" r="1" fill="#F0F0F0"/>
</svg>
<svg style="position:absolute;left:828px;top:174px;overflow:visible" width="24" height="22" viewBox="828 174 24 22"><defs><linearGradient id="pc1" x1="0" y1="0" x2="1" y2="1"><stop offset="0" stop-color="#0C9A0C"/><stop offset="0.5" stop-color="#5ED03C"/><stop offset="1" stop-color="#A0E88A"/></linearGradient></defs>
<path d="M832.5 190 L846.5 176.8 Q848.5 176 849.6 177.8 Q850 179.5 848.8 180.6 L835 193.6 Z" fill="url(#pc1)" stroke="#1C7A1C" stroke-width="0.7"/>
<path d="M832.5 190 L835 193.6 L831 194.8 Z" fill="#F0E8C8" stroke="#2A6A2A" stroke-width="0.6"/>
<path d="M831 194.8 L831.8 193.2 L832.8 194.2 Z" fill="#1A5A1A"/>
</svg>
<svg style="position:absolute;left:951px;top:173px;overflow:visible" width="28" height="26" viewBox="951 173 28 26"><defs></defs>
<rect x="954.4" y="176.6" width="17" height="17.6" rx="1.2" fill="#F4F8FE" stroke="#8AB2E6" stroke-width="1.6"/>
<rect x="956.6" y="178.9" width="12.8" height="1.6" fill="#6DBE62"/>
<path d="M957 182.4 L969.5 182.4 M957 185.2 L969.5 185.2 M957 188 L969.5 188 M957 190.8 L969.5 190.8 M958 182 L958 192 M961.5 182 L961.5 192" stroke="#C8D8EE" stroke-width="0.8"/>
<g transform="translate(967.8,189.3)"><path d="M4.47 -1.08 L6.21 -1.08 L6.21 1.08 L4.47 1.08 L3.93 2.40 L5.15 3.62 L3.62 5.15 L2.40 3.93 L1.08 4.47 L1.08 6.21 L-1.08 6.21 L-1.08 4.47 L-2.40 3.93 L-3.62 5.15 L-5.15 3.62 L-3.93 2.40 L-4.47 1.08 L-6.21 1.08 L-6.21 -1.08 L-4.47 -1.08 L-3.93 -2.40 L-5.15 -3.62 L-3.62 -5.15 L-2.40 -3.93 L-1.08 -4.47 L-1.08 -6.21 L1.08 -6.21 L1.08 -4.47 L2.40 -3.93 L3.62 -5.15 L5.15 -3.62 L3.93 -2.40 Z" fill="#8E8E8E" stroke="#6A6A6A" stroke-width="0.5"/><circle r="2.2" fill="#C8DCF4" stroke="#777" stroke-width="0.5"/></g>
</svg>
<svg style="position:absolute;left:1038px;top:172px;overflow:visible" width="25" height="27" viewBox="1038 172 25 27"><defs></defs>
<path d="M1042.6 175.6 L1055 175.6 L1059.4 180 L1059.4 195.2 L1042.6 195.2 Z" fill="#DCE9FA" stroke="#6A9AD8" stroke-width="1.2"/>
<path d="M1055 175.6 L1055 180 L1059.4 180" fill="#B8D0F0" stroke="#6A9AD8" stroke-width="0.8"/>
<path d="M1041 180 L1054.5 180 L1050 185.6 L1053.6 191 L1048.5 191 L1046.8 188.4 L1043.5 191.2 L1041 191.2 L1045.2 185.6 Z" fill="#3E9440"/>
<path d="M1043 181 L1052 190" stroke="#9ED08A" stroke-width="1" opacity="0.8"/>
</svg>
<svg style="position:absolute;left:1125px;top:172px;overflow:visible" width="26" height="27" viewBox="1125 172 26 27"><defs><linearGradient id="ex1" x1="0" y1="0" x2="1" y2="0"><stop offset="0" stop-color="#E0B07A"/><stop offset="0.6" stop-color="#D09850"/><stop offset="1" stop-color="#A8702A"/></linearGradient></defs>
<rect x="1129" y="177.6" width="10" height="16" fill="#A6A6A6" stroke="#6E6E6E" stroke-width="1"/>
<rect x="1127.5" y="193.2" width="12" height="1.8" fill="#707070"/>
<path d="M1138.8 178 L1147.8 175.2 L1147.8 196 L1138.8 194.6 Z" fill="url(#ex1)"/>
<circle cx="1144.8" cy="185.6" r="1.1" fill="#F8D048"/>
<path d="M1128 186 L1133.4 180.6 L1133.4 183.6 L1139 183.6 L1139 188.6 L1133.4 188.6 L1133.4 191.6 Z" fill="#5CB65A" stroke="#2E8A30" stroke-width="0.6"/>
</svg>
</body></html>
